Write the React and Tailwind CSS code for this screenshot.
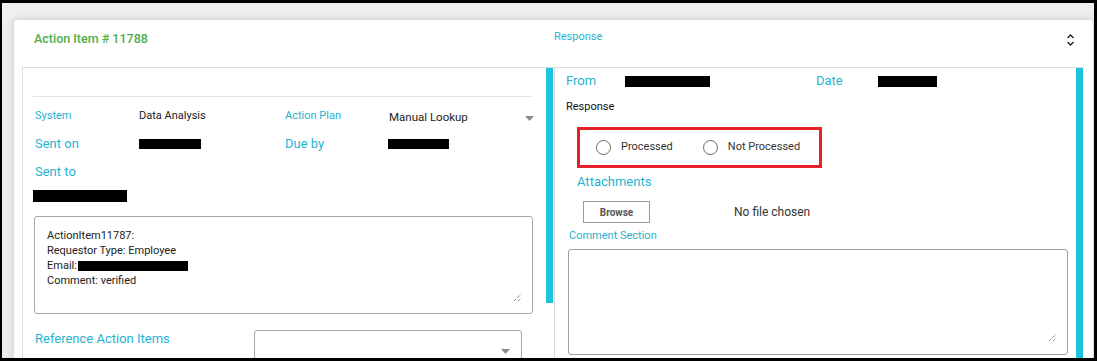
import React from "react";

const cyan = "text-[#1fb3cf]";

function Caret({ className = "" }) {
  return (
    <svg width="9" height="5" viewBox="0 0 9 5" className={className}>
      <path d="M0 0 L9 0 L4.5 5 Z" fill="#8a8a8a" />
    </svg>
  );
}

function Resize() {
  return (
    <svg width="9" height="9" viewBox="0 0 9 9">
      <path d="M1 8 L8 1 M5 8 L8 5" stroke="#555" strokeWidth="1" strokeDasharray="1 1" />
    </svg>
  );
}

function Radio({ label }) {
  return (
    <div className="flex items-center">
      <div className="w-[15px] h-[15px] rounded-full border border-[#6b6b6b] bg-white" />
      <span className="ml-[10px] text-[11px] text-[#333]">{label}</span>
    </div>
  );
}

export default function App() {
  return (
    <div
      className="w-[1097px] h-[361px] bg-black pt-[3px] pl-[2px] pr-[3px] pb-[3px]"
      style={{ fontFamily: "Roboto, 'Liberation Sans', sans-serif" }}
    >
      <div className="w-full h-full bg-[#efefef] overflow-hidden pt-[16px] pl-[11px]">
        <div className="h-[400px] bg-white border border-[#dcdcdc] rounded-[3px] shadow-[0_0_8px_rgba(0,0,0,0.12)]">
          {/* header */}
          <div className="flex h-[47px] leading-none">
            <div className="w-[540px] pl-[20px] pt-[12px] text-[12.5px] leading-[14px] font-medium text-[#4dae4a]">
              Action Item # 11788
            </div>
            <div className={`flex-1 pt-[10px] text-[11px] leading-[13px] ${cyan}`}>Response</div>
            <div className="pr-[18px] pt-[14px]">
              <svg width="9" height="12" viewBox="0 0 9 12" className="block">
                <path d="M1.5 4 L4.5 1 L7.5 4" stroke="#222" strokeWidth="1.4" fill="none" />
                <path d="M1.5 8 L4.5 11 L7.5 8" stroke="#222" strokeWidth="1.4" fill="none" />
              </svg>
            </div>
          </div>

          {/* body */}
          <div className="ml-[8px] mr-[9px] border-t border-l border-[#dedede] flex h-[300px]">
            {/* left panel */}
            <div className="w-[521px] shrink-0">
              <div className="h-[28px]" />
              <div className="ml-[10px] mr-[12px] border-t border-[#e3e3e3]" />
              <div className="mt-[5px] h-[28px] flex items-center pl-[12px] text-[11px]">
                <span className={`w-[104px] ${cyan}`}>System</span>
                <span className="w-[146px] text-[#222]">Data Analysis</span>
                <span className={`w-[104px] ${cyan}`}>Action Plan</span>
                <span className="text-[11.5px] text-[#222] mt-[3px]">Manual Lookup</span>
                <Caret className="ml-auto mr-[10px] mt-[5px]" />
              </div>
              <div className="h-[27px] flex items-center pl-[12px] text-[13px]">
                <span className={`w-[104px] ${cyan}`}>Sent on</span>
                <span className="w-[146px]">
                  <span className="block w-[62px] h-[10px] bg-black" />
                </span>
                <span className={`w-[103px] ${cyan}`}>Due by</span>
                <span className="block w-[61px] h-[10px] bg-black" />
              </div>
              <div className="h-[30px] flex items-center pl-[12px] text-[13px]">
                <span className={cyan}>Sent to</span>
              </div>
              <div className="ml-[10px] mt-[3px] w-[94px] h-[12px] bg-black" />
              <div className="ml-[11px] mr-[11px] mt-[14px] h-[98px] border border-[#a9a9a9] rounded-[3px] pl-[12px] pt-[11px] relative text-[11px] leading-[15px] text-[#222]">
                <div>ActionItem11787:</div>
                <div>Requestor Type: Employee</div>
                <div className="flex items-center">
                  Email:
                  <span className="ml-[1px] w-[110px] h-[10px] bg-black inline-block" />
                </div>
                <div>Comment: verified</div>
                <div className="absolute right-[10px] bottom-[11px]">
                  <Resize />
                </div>
              </div>
              <div className="mt-[16px] flex pl-[12px]">
                <span className={`w-[219px] text-[13px] leading-[18px] ${cyan}`}>Reference Action Items</span>
                <div className="w-[268px] h-[40px] border border-[#a9a9a9] rounded-[3px] relative">
                  <Caret className="absolute right-[11px] top-[18px]" />
                </div>
              </div>
            </div>

            {/* left scrollbar */}
            <div className="w-[11px] shrink-0 flex">
              <div className="ml-[2px] w-[7px] h-[235px] bg-[#1bc3dc]" />
              <div className="ml-[1px] w-[1px] h-full bg-[#dcdcdc]" />
            </div>

            {/* right panel */}
            <div className="w-[521px] shrink-0">
              <div className="h-[26px] flex items-center pl-[11px] text-[13px]">
                <span className={`w-[59px] ${cyan}`}>From</span>
                <span className="w-[191px]">
                  <span className="block w-[85px] h-[11px] bg-black" />
                </span>
                <span className={`w-[62px] ${cyan}`}>Date</span>
                <span className="block w-[59px] h-[11px] bg-black" />
              </div>
              <div className="h-[26px] flex items-center pl-[11px] text-[11px] text-[#111]">Response</div>
              <div className="mt-[7px] ml-[22px] w-[245px] h-[41px] border-[3px] border-[#e8202a] flex items-center pl-[16px]">
                <Radio label="Processed" />
                <div className="ml-[30px]">
                  <Radio label="Not Processed" />
                </div>
              </div>
              <div className="h-[28px] flex items-center pl-[22px] text-[13px]">
                <span className={cyan}>Attachments</span>
              </div>
              <div className="mt-[5px] ml-[28px] flex items-center">
                <div className="w-[67px] h-[22px] border border-[#9a9a9a] flex items-center justify-center text-[10px] font-bold text-[#555]">
                  Browse
                </div>
                <span className="ml-[84px] text-[12px] text-[#333]">No file chosen</span>
              </div>
              <div className="h-[26px] flex items-center pl-[14px] text-[11px]">
                <span className={cyan}>Comment Section</span>
              </div>
              <div className="ml-[13px] w-[500px] h-[106px] border border-[#a0a0a0] rounded-[3px] relative">
                <div className="absolute right-[10px] bottom-[12px]">
                  <Resize />
                </div>
              </div>
            </div>

            {/* right scrollbar */}
            <div className="w-[7px] shrink-0 bg-[#1bc3dc]" />
          </div>
        </div>
      </div>
    </div>
  );
}
